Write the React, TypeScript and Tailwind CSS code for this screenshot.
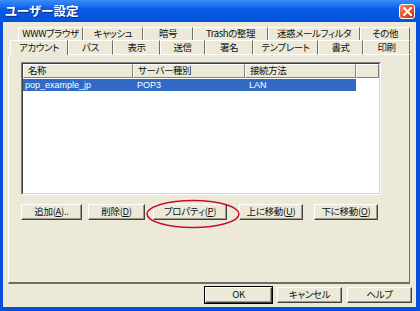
import React from "react";

const jp = "font-['MS_UI_Gothic','Noto_Sans_CJK_JP',sans-serif] [font-feature-settings:'palt']";

const backTabs = [
  { label: "WWWブラウザ", w: "w-[65px]" },
  { label: "キャッシュ", w: "w-[60px]" },
  { label: "暗号", w: "w-[50px]" },
  { label: "Trashの整理", w: "w-[75px]" },
  { label: "迷惑メールフィルタ", w: "w-[92px]" },
  { label: "その他", w: "w-[50px]" },
];

const frontTabs = [
  { label: "アカウント", w: "w-[58px]", active: true },
  { label: "パス", w: "w-[45px]" },
  { label: "表示", w: "w-[47px]" },
  { label: "送信", w: "w-[45px]" },
  { label: "署名", w: "w-[48px]" },
  { label: "テンプレート", w: "w-[65px]" },
  { label: "書式", w: "w-[45px]" },
  { label: "印刷", w: "w-[47px]" },
];

const raised =
  "border border-t-white border-l-white border-r-[#404040] border-b-[#404040] shadow-[inset_-1px_-1px_0_#9D9A8C]";

const tabText = "text-[9.5px] tracking-[-0.4px] leading-none text-[#111]";

function Btn({ children, w, ml, def }: { children: React.ReactNode; w: string; ml?: string; def?: boolean }) {
  return (
    <div className={`${w} ${ml ?? ""} h-[16px] ${def ? "outline outline-1 outline-black" : ""} ${raised} bg-[#ECE9D8] flex items-center justify-center text-[9.5px] tracking-[-0.3px] leading-none text-[#111]`}>
      {children}
    </div>
  );
}

function Key({ k }: { k: string }) {
  return <span className="underline">{k}</span>;
}

export default function App() {
  return (
    <div className={`w-[420px] h-[311px] bg-[#0850DC] flex flex-col ${jp}`}>
      {/* Title bar */}
      <div className="h-[22px] flex items-center justify-between pl-[5px] pr-[5px] bg-linear-to-b from-[#3B8DF8] via-[#0A5DE8] via-40% to-[#0352DA]">
        <span className="text-white font-bold text-[12.5px] leading-none [text-shadow:1px_1px_0_#0A2A80]">ユーザー設定</span>
        <div className="w-[16px] h-[15px] mt-[1px] rounded-[3px] border border-white bg-linear-to-br from-[#F08C6C] via-[#E2542E] to-[#C03A18] flex items-center justify-center">
          <svg width="9" height="9" viewBox="0 0 9 9">
            <path d="M1 1 L8 8 M8 1 L1 8" stroke="white" strokeWidth="2" strokeLinecap="square" />
          </svg>
        </div>
      </div>

      {/* Body */}
      <div className="flex-1 ml-[3px] mr-[4px] mb-[4px] bg-[#ECE9D8] pt-[5px] pl-[5px] flex flex-col">
        {/* Tab rows */}
        <div className="flex ml-[10px] h-[13px]">
          {backTabs.map((t) => (
            <div key={t.label} className={`${t.w} h-full flex items-center justify-center border-l border-t border-white border-r border-r-[#716F64] ${tabText}`}>
              {t.label}
            </div>
          ))}
        </div>
        <div className="flex ml-[2px] h-[15px]">
          {frontTabs.map((t) => (
            <div
              key={t.label}
              className={`${t.w} h-full flex items-center justify-center border-l border-t border-white border-r border-r-[#716F64] ${tabText} ${t.active ? "pb-[1px]" : "border-b border-b-white"}`}
            >
              {t.label}
            </div>
          ))}
        </div>

        {/* Panel */}
        <div className="relative w-[402px] h-[229px] border-l border-white border-r border-r-[#716F64] border-b-2 border-b-[#6F6D62] flex flex-col">
          {/* List */}
          <div className="mt-[7px] ml-[12px] w-[360px] h-[133px] border border-t-[#808080] border-l-[#808080] border-r-white border-b-white">
            <div className="w-full h-full border border-t-[#404040] border-l-[#404040] border-r-[#D4D0C8] border-b-[#D4D0C8] bg-white flex flex-col">
              <div className={`flex h-[14px] bg-[#ECE9D8] ${tabText}`}>
                <div className="w-[110px] border-l border-t border-white border-r border-r-[#808080] border-b border-b-[#808080] flex items-center pl-[4px]">名称</div>
                <div className="w-[112px] border-l border-t border-white border-r border-r-[#808080] border-b border-b-[#808080] flex items-center pl-[4px]">サーバー種別</div>
                <div className="w-[111px] border-l border-t border-white border-r border-r-[#808080] border-b border-b-[#808080] flex items-center pl-[4px]">接続方法</div>
                <div className="flex-1 border-l border-t border-white border-r border-r-[#808080] border-b border-b-[#808080]" />
              </div>
              <div className="flex w-[333px] h-[12px] mt-[1px] bg-[#316AC5] text-white text-[9px] leading-none font-['Liberation_Sans',sans-serif]">
                <div className="w-[110px] flex items-center pl-[2px]">pop_example_jp</div>
                <div className="w-[112px] flex items-center pl-[4px]">POP3</div>
                <div className="w-[111px] flex items-center pl-[4px]">LAN</div>
              </div>
            </div>
          </div>

          {/* Account buttons */}
          <div className="flex mt-[9px] ml-[12px]">
            <Btn w="w-[61px]">追加(<Key k="A" />)..</Btn>
            <Btn w="w-[57px]" ml="ml-[6px]">削除(<Key k="D" />)</Btn>
            <Btn w="w-[74px]" ml="ml-[8px]">プロパティ(<Key k="P" />)</Btn>
            <Btn w="w-[64px]" ml="ml-[12px]">上に移動(<Key k="U" />)</Btn>
            <Btn w="w-[64px]" ml="ml-[11px]">下に移動(<Key k="O" />)</Btn>
          </div>

          {/* Red annotation */}
          <svg className="absolute left-[137px] top-[144px]" width="94" height="30" viewBox="0 0 94 30">
            <ellipse cx="47" cy="15" rx="46" ry="13.5" fill="none" stroke="#C8102E" strokeWidth="1.6" />
          </svg>
        </div>

        {/* Dialog buttons */}
        <div className="flex justify-end mt-[3px] pr-[4px]">
          <Btn w="w-[67px]" def>OK</Btn>
          <Btn w="w-[65px]" ml="ml-[5px]">キャンセル</Btn>
          <Btn w="w-[65px]" ml="ml-[5px]">ヘルプ</Btn>
        </div>
      </div>
    </div>
  );
}
